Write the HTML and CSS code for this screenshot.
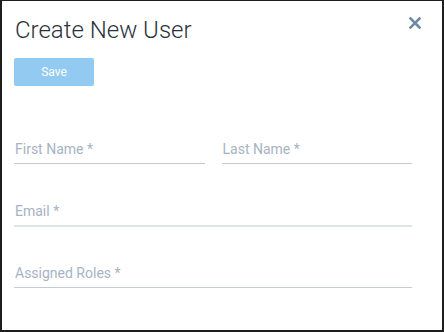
FILE: index.html
```html
<!DOCTYPE html>
<html lang="en">
  <head>
    <meta charset="UTF-8" />
    <meta name="viewport" content="width=device-width, initial-scale=1.0" />
    <title>Create New User</title>
    <link rel="stylesheet" href="styles.css">
  </head>
  <body>
    <div class="dialog">
      <h1 class="title">Create New User</h1>
      <button class="close" aria-label="Close">
        <svg width="12" height="12" viewBox="0 0 12 12">
          <path d="M1.5 1.5 L10.5 10.5 M10.5 1.5 L1.5 10.5" stroke="#6f8aa6" stroke-width="2.6" stroke-linecap="square" />
        </svg>
      </button>
      <button class="save">Save</button>

      <div class="form">
        <div class="row">
          <div class="field"><span class="label">First Name *</span></div>
          <div class="field"><span class="label">Last Name *</span></div>
        </div>
        <div class="field light"><span class="label">Email *</span></div>
        <div class="field"><span class="label">Assigned Roles *</span></div>
      </div>
    </div>
  </body>
</html>
```

FILE: styles.css
```css
body {
  margin: 0;
  padding: 0;
  background: white;
  font-family: Roboto, "Liberation Sans", sans-serif;
}
.dialog {
  position: relative;
  box-sizing: border-box;
  width: 444px;
  height: 332px;
  border: 2px solid #1e1e1e;
  border-top-width: 1px;
  padding: 15px 30px 0 12px;
  background: white;
}
.title {
  margin: 0 0 0 1px;
  font-size: 24px;
  line-height: 28px;
  font-weight: 300;
  color: #2b313a;
}
.close {
  position: absolute;
  top: 16px;
  right: 21px;
  width: 12px;
  height: 12px;
  padding: 0;
  border: none;
  background: none;
  cursor: pointer;
}
.close svg {
  display: block;
}
.save {
  display: block;
  margin-top: 14px;
  width: 80px;
  height: 28px;
  border: none;
  border-radius: 2px;
  background: #92caf1;
  color: white;
  font-family: Roboto, "Liberation Sans", sans-serif;
  font-size: 12px;
  font-weight: 400;
  padding: 0;
}
.form {
  margin-top: 53px;
  display: flex;
  flex-direction: column;
  gap: 37px;
}
.row {
  display: flex;
  gap: 17px;
}
.row .field {
  flex: 1;
}
.field {
  padding-bottom: 4px;
  border-bottom: 1px solid #c4cbd4;
}
.field.light {
  border-bottom: 2px solid #dfe4eb;
  margin-bottom: -1px;
}
.label {
  display: block;
  padding-left: 1px;
  font-size: 14px;
  line-height: 20px;
  color: #a7b3c3;
}
```
